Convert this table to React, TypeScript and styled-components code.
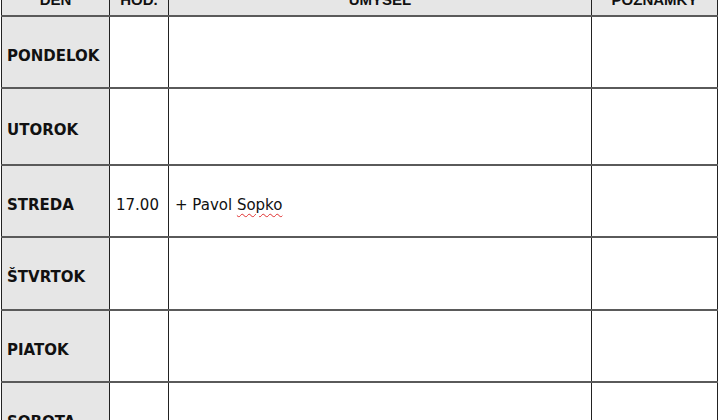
import { FC } from "react";
import styled, { createGlobalStyle } from "styled-components";

type Row = { day: string; time?: string; intent?: string; misspelled?: string; height: number };

const ROWS: Row[] = [
  { day: "PONDELOK", height: 72 },
  { day: "UTOROK", height: 77 },
  { day: "STREDA", time: "17.00", intent: "+ Pavol ", misspelled: "Sopko", height: 72 },
  { day: "ŠTVRTOK", height: 73 },
  { day: "PIATOK", height: 72 },
  { day: "SOBOTA", height: 72 },
];

const GlobalStyle = createGlobalStyle`
  html, body {
    margin: 0;
    padding: 0;
    background: #ffffff;
    overflow: hidden;
  }
  body {
    width: 720px;
    height: 420px;
    font-family: "DejaVu Sans", "Noto Sans", sans-serif;
  }
`;

const Sheet = styled.div`
  width: 720px;
  height: 420px;
  overflow: hidden;
  padding-left: 1px;
`;

const Table = styled.table`
  width: 716px;
  margin-top: -33px;
  border-collapse: collapse;
  table-layout: fixed;
  color: #111;
`;

const HeadCell = styled.th`
  height: 42px;
  padding: 0 0 5px;
  background: #e6e6e6;
  border: 1px solid #222;
  border-bottom: 2px solid #5a5a5a;
  font-family: "Liberation Sans", Arial, sans-serif;
  font-size: 15px;
  font-weight: 700;
  text-align: center;
  vertical-align: bottom;
  line-height: 20px;
`;

const DayCell = styled.td<{ $h: number }>`
  height: ${(p) => p.$h}px;
  padding: 7px 0 0 5px;
  background: #e6e6e6;
  border-left: 1px solid #222;
  border-right: 1px solid #222;
  border-top: 2px solid #5a5a5a;
  border-bottom: 2px solid #5a5a5a;
  font-size: 15px;
  font-weight: 700;
  white-space: nowrap;
  box-sizing: border-box;
`;

const Cell = styled.td`
  padding: 7px 0 0 6px;
  border-left: 1px solid #222;
  border-right: 1px solid #222;
  border-top: 2px solid #5a5a5a;
  border-bottom: 2px solid #5a5a5a;
  font-size: 15px;
  white-space: nowrap;
`;

const Misspelled = styled.span`
  text-decoration: underline wavy #e03030;
  text-decoration-thickness: 1px;
  text-underline-offset: 3px;
`;

const App: FC = () => {
  return (
    <>
      <GlobalStyle />
      <Sheet>
        <Table>
          <colgroup>
            <col style={{ width: 108 }} />
            <col style={{ width: 59 }} />
            <col style={{ width: 423 }} />
            <col style={{ width: 126 }} />
          </colgroup>
          <thead>
            <tr>
              <HeadCell>DEŇ</HeadCell>
              <HeadCell>HOD.</HeadCell>
              <HeadCell>ÚMYSEL</HeadCell>
              <HeadCell>POZNÁMKY</HeadCell>
            </tr>
          </thead>
          <tbody>
            {ROWS.map((row) => (
              <tr key={row.day}>
                <DayCell $h={row.height}>{row.day}</DayCell>
                <Cell>{row.time}</Cell>
                <Cell>
                  {row.intent}
                  {row.misspelled && <Misspelled>{row.misspelled}</Misspelled>}
                </Cell>
                <Cell />
              </tr>
            ))}
          </tbody>
        </Table>
      </Sheet>
    </>
  );
};

export default App;
